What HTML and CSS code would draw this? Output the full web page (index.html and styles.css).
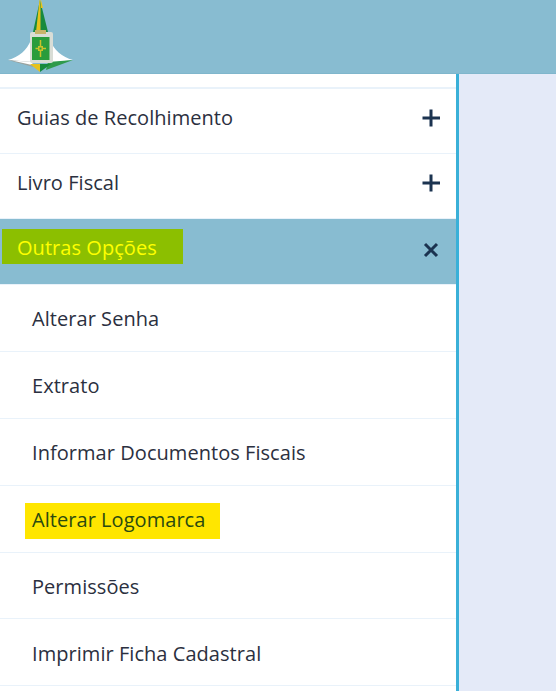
FILE: index.html
```html
<!DOCTYPE html>
<html lang="pt-BR">
<head>
  <meta charset="UTF-8" />
  <meta name="viewport" content="width=device-width, initial-scale=1.0"/>
  <title>Menu</title>
  <link rel="stylesheet" href="styles.css">
</head>
<body>

<!-- Header -->
<header class="topbar">
  <svg class="logo" width="80" height="74" viewBox="0 0 80 74">
    <!-- wings -->
    <path d="M31 40 C27 50 19 57 8 60 L33 63 Z" fill="#fff"/>
    <path d="M50 40 C54 50 62 57 73 60 L48 63 Z" fill="#fff"/>
    <path d="M8 60 L33 62 L33 67 Z" fill="#9aa39f"/>
    <path d="M12 60.500 L33 62 L32 65 Z" fill="#fff"/>
    <path d="M73 60 L48 62 L46 70 Z" fill="#2f9a4b"/>
    <!-- spike -->
    <path d="M40 0 L33 32 L48 32 Z" fill="#178a3e"/>
    <path d="M39.500 0 L36 32 L40.500 32 L40.500 0 Z" fill="#e6c21c"/>
    <path d="M41 0 L41 8 L43 8 Z" fill="#e6c21c"/>
    <!-- bottom point -->
    <path d="M30 64 L40 72 L40 64 Z" fill="#e6c21c"/>
    <path d="M51 64 L40 72 L40 64 Z" fill="#178a3e"/>
    <!-- shield -->
    <rect x="30" y="32" width="23" height="31" rx="2" fill="#d9ddd6"/>
    <rect x="35" y="30" width="11" height="4" fill="#c9b46a"/>
    <rect x="32" y="37" width="17.500" height="23" fill="#2a9c3c"/>
    <path d="M40.500 40 V57 M35.500 48.500 H46" stroke="#c9c22a" stroke-width="1.500"/>
    <rect x="38" y="46" width="5" height="5" fill="#c9c22a"/>
    <rect x="39.500" y="47.500" width="2" height="2" fill="#2a9c3c"/>
  </svg>
</header>

<div class="layout">
  <nav class="sidebar">
    <div class="stub"></div>
    <a class="row top">
      <span>Guias de Recolhimento</span>
      <svg class="icon" width="18" height="18" viewBox="0 0 18 18"><path d="M9 0.500 V17.500 M0.500 9 H18" stroke="#1b3350" stroke-width="3"/></svg>
    </a>
    <a class="row top">
      <span>Livro Fiscal</span>
      <svg class="icon" width="18" height="18" viewBox="0 0 18 18"><path d="M9 0.500 V17.500 M0.500 9 H18" stroke="#1b3350" stroke-width="3"/></svg>
    </a>
    <a class="row active">
      <span class="mark-green">Outras Opções</span>
      <svg class="icon" width="18" height="18" viewBox="0 0 18 18"><path d="M3 3 L15 15 M15 3 L3 15" stroke="#1b3350" stroke-width="3"/></svg>
    </a>
    <a class="row sub">Alterar Senha</a>
    <a class="row sub">Extrato</a>
    <a class="row sub">Informar Documentos Fiscais</a>
    <a class="row sub"><span class="mark-yellow">Alterar Logomarca</span></a>
    <a class="row sub short">Permissões</a>
    <a class="row sub low">Imprimir Ficha Cadastral</a>
  </nav>
  <main class="content"></main>
</div>

</body>
</html>
```

FILE: styles.css
```css
* {
  margin: 0;
  padding: 0;
  box-sizing: border-box;
}

body {
  height: 100vh;
  overflow: hidden;
  background: #e4eaf8;
  font-family: "Open Sans", "Noto Sans", sans-serif;
  color: #2b3040;
}

.topbar {
  height: 74px;
  background: #88bcd1;
  border-bottom: 1px solid #7fb6cc;
  overflow: hidden;
}

.logo {
  display: block;
  filter: blur(0.4px);
}

.layout {
  display: flex;
  height: 617px;
}

.sidebar {
  width: 459px;
  flex-shrink: 0;
  background: #fff;
  border-right: 3px solid #3ab0d8;
  overflow: hidden;
}

.stub {
  height: 15px;
  border-bottom: 2px solid #e9f2fa;
}

.row {
  display: flex;
  align-items: center;
  justify-content: space-between;
  height: 65px;
  padding: 0 16px 0 17px;
  border-bottom: 1px solid #e9f2fa;
  font-size: 20px;
  letter-spacing: 0.05px;
}

.row.top {
  padding-bottom: 7px;
}

.row.active {
  height: 66px;
  padding-bottom: 11px;
  background: #88bcd1;
  color: #ffff00;
}

.row.active .icon {
  margin-top: 7px;
}

.row.sub {
  height: 67px;
  padding-left: 32px;
}

.row.short {
  height: 66px;
  padding-top: 1px;
}

.row.low {
  padding-top: 2px;
}

.mark-green {
  background: #8cbf00;
  padding: 5px 26px 3px 15px;
  margin-left: -15px;
}

.mark-yellow {
  background: #ffe600;
  color: #2a4a10;
  padding: 3px 15px 6px 7px;
  margin: 4px 0 0 -7px;
}
```
